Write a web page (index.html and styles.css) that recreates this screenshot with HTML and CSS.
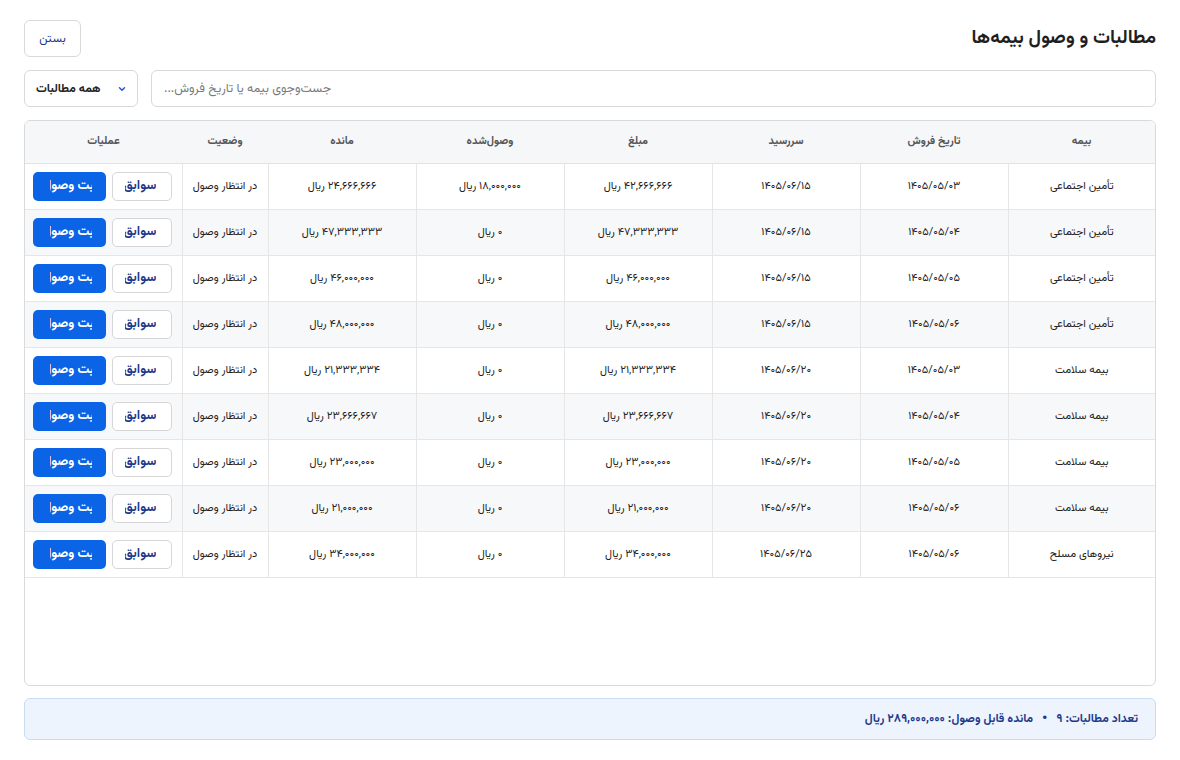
FILE: index.html
```html
<!DOCTYPE html>
<html lang="fa" dir="rtl">
<head>
<meta charset="utf-8">
<title>مطالبات و وصول بیمه‌ها</title>
<link rel="stylesheet" href="styles.css">
</head>
<body>
<div class="page">
  <header class="topbar">
    <h1 class="title">مطالبات و وصول بیمه‌ها</h1>
    <button class="btn-close">بستن</button>
  </header>
  <div class="filters">
    <div class="search"><span>جست‌وجوی بیمه یا تاریخ فروش...</span></div>
    <div class="select">
      <svg class="chev" width="10" height="10" viewBox="0 0 10 10"><path d="M2.5 3.8 L5 6.2 L7.5 3.8" fill="none" stroke="#1d4ed8" stroke-width="1.4" stroke-linecap="round" stroke-linejoin="round"/></svg>
      <span class="select-label">همه مطالبات</span>
    </div>
  </div>
  <div class="table-wrap">
    <table class="grid">
      <colgroup>
        <col class="c-ins"><col class="c-w"><col class="c-w"><col class="c-w"><col class="c-w"><col class="c-w"><col class="c-status"><col class="c-ops">
      </colgroup>
      <thead>
        <tr><th>بیمه</th><th>تاریخ فروش</th><th>سررسید</th><th>مبلغ</th><th>وصول‌شده</th><th>مانده</th><th>وضعیت</th><th>عملیات</th></tr>
      </thead>
      <tbody>
        <tr><td>تأمین اجتماعی</td><td>۱۴۰۵/۰۵/۰۳</td><td>۱۴۰۵/۰۶/۱۵</td><td>۴۲,۶۶۶,۶۶۶ ریال</td><td>۱۸,۰۰۰,۰۰۰ ریال</td><td>۲۴,۶۶۶,۶۶۶ ریال</td><td>در انتظار وصول</td><td class="ops"><div class="ops-in"><span class="b b-hist"><span class="clip"><span>سوابق</span></span></span><span class="b b-pay"><span class="clip"><span>ثبت وصول</span></span></span></div></td></tr>
        <tr><td>تأمین اجتماعی</td><td>۱۴۰۵/۰۵/۰۴</td><td>۱۴۰۵/۰۶/۱۵</td><td>۴۷,۳۳۳,۳۳۳ ریال</td><td>۰ ریال</td><td>۴۷,۳۳۳,۳۳۳ ریال</td><td>در انتظار وصول</td><td class="ops"><div class="ops-in"><span class="b b-hist"><span class="clip"><span>سوابق</span></span></span><span class="b b-pay"><span class="clip"><span>ثبت وصول</span></span></span></div></td></tr>
        <tr><td>تأمین اجتماعی</td><td>۱۴۰۵/۰۵/۰۵</td><td>۱۴۰۵/۰۶/۱۵</td><td>۴۶,۰۰۰,۰۰۰ ریال</td><td>۰ ریال</td><td>۴۶,۰۰۰,۰۰۰ ریال</td><td>در انتظار وصول</td><td class="ops"><div class="ops-in"><span class="b b-hist"><span class="clip"><span>سوابق</span></span></span><span class="b b-pay"><span class="clip"><span>ثبت وصول</span></span></span></div></td></tr>
        <tr><td>تأمین اجتماعی</td><td>۱۴۰۵/۰۵/۰۶</td><td>۱۴۰۵/۰۶/۱۵</td><td>۴۸,۰۰۰,۰۰۰ ریال</td><td>۰ ریال</td><td>۴۸,۰۰۰,۰۰۰ ریال</td><td>در انتظار وصول</td><td class="ops"><div class="ops-in"><span class="b b-hist"><span class="clip"><span>سوابق</span></span></span><span class="b b-pay"><span class="clip"><span>ثبت وصول</span></span></span></div></td></tr>
        <tr><td>بیمه سلامت</td><td>۱۴۰۵/۰۵/۰۳</td><td>۱۴۰۵/۰۶/۲۰</td><td>۲۱,۳۳۳,۳۳۴ ریال</td><td>۰ ریال</td><td>۲۱,۳۳۳,۳۳۴ ریال</td><td>در انتظار وصول</td><td class="ops"><div class="ops-in"><span class="b b-hist"><span class="clip"><span>سوابق</span></span></span><span class="b b-pay"><span class="clip"><span>ثبت وصول</span></span></span></div></td></tr>
        <tr><td>بیمه سلامت</td><td>۱۴۰۵/۰۵/۰۴</td><td>۱۴۰۵/۰۶/۲۰</td><td>۲۳,۶۶۶,۶۶۷ ریال</td><td>۰ ریال</td><td>۲۳,۶۶۶,۶۶۷ ریال</td><td>در انتظار وصول</td><td class="ops"><div class="ops-in"><span class="b b-hist"><span class="clip"><span>سوابق</span></span></span><span class="b b-pay"><span class="clip"><span>ثبت وصول</span></span></span></div></td></tr>
        <tr><td>بیمه سلامت</td><td>۱۴۰۵/۰۵/۰۵</td><td>۱۴۰۵/۰۶/۲۰</td><td>۲۳,۰۰۰,۰۰۰ ریال</td><td>۰ ریال</td><td>۲۳,۰۰۰,۰۰۰ ریال</td><td>در انتظار وصول</td><td class="ops"><div class="ops-in"><span class="b b-hist"><span class="clip"><span>سوابق</span></span></span><span class="b b-pay"><span class="clip"><span>ثبت وصول</span></span></span></div></td></tr>
        <tr><td>بیمه سلامت</td><td>۱۴۰۵/۰۵/۰۶</td><td>۱۴۰۵/۰۶/۲۰</td><td>۲۱,۰۰۰,۰۰۰ ریال</td><td>۰ ریال</td><td>۲۱,۰۰۰,۰۰۰ ریال</td><td>در انتظار وصول</td><td class="ops"><div class="ops-in"><span class="b b-hist"><span class="clip"><span>سوابق</span></span></span><span class="b b-pay"><span class="clip"><span>ثبت وصول</span></span></span></div></td></tr>
        <tr><td>نیروهای مسلح</td><td>۱۴۰۵/۰۵/۰۶</td><td>۱۴۰۵/۰۶/۲۵</td><td>۳۴,۰۰۰,۰۰۰ ریال</td><td>۰ ریال</td><td>۳۴,۰۰۰,۰۰۰ ریال</td><td>در انتظار وصول</td><td class="ops"><div class="ops-in"><span class="b b-hist"><span class="clip"><span>سوابق</span></span></span><span class="b b-pay"><span class="clip"><span>ثبت وصول</span></span></span></div></td></tr>
      </tbody>
    </table>
  </div>
  <footer class="summary">
    <span>تعداد مطالبات: ۹</span>
    <span class="dot">•</span>
    <span>مانده قابل وصول: ۲۸۹,۰۰۰,۰۰۰ ریال</span>
  </footer>
</div>
</body>
</html>
```

FILE: styles.css
```css
* { box-sizing: border-box; }
html, body { margin: 0; padding: 0; background: #fff; }
body {
  font-family: "Vazirmatn", "DejaVu Sans", "Noto Sans", sans-serif;
  color: #222;
  direction: rtl;
}
.page {
  height: 760px;
  padding: 20px 24px;
  display: flex;
  flex-direction: column;
}
.topbar {
  display: flex;
  align-items: center;
  justify-content: space-between;
  height: 37px;
}
.title {
  margin: 0;
  font-size: 19px;
  font-weight: 700;
  color: #1f1f1f;
}
.btn-close {
  width: 57px;
  height: 37px;
  border: 1px solid #d9d9d9;
  border-radius: 6px;
  background: #fff;
  color: #1e3a8a;
  font-family: inherit;
  font-size: 12px;
}
.filters {
  display: flex;
  gap: 13px;
  margin-top: 13px;
  height: 37px;
}
.search {
  flex: 1;
  border: 1px solid #d9d9d9;
  border-radius: 6px;
  display: flex;
  align-items: center;
  justify-content: flex-end;
  padding-left: 12px;
  font-size: 12.5px;
  color: #7a7a7a;
}
.select {
  width: 114px;
  border: 1px solid #d9d9d9;
  border-radius: 6px;
  display: flex;
  align-items: center;
  justify-content: space-between;
  padding: 0 10px 0 11px;
}
.select-label { font-size: 12px; font-weight: 700; color: #222; }
.chev { display: block; }
.table-wrap {
  margin-top: 13px;
  flex: 1;
  border: 1px solid #dadada;
  border-radius: 6px;
  overflow: hidden;
}
.grid {
  width: 100%;
  table-layout: fixed;
  border-collapse: collapse;
  font-size: 11px;
}
.c-ins { width: 147px; }
.c-w { width: 148px; }
.c-status { width: 86px; }
.c-ops { width: 157px; }
.grid th {
  height: 42px;
  background: #f6f7f9;
  color: #555;
  font-weight: 700;
  font-size: 11px;
  border-bottom: 1px solid #e2e2e2;
  text-align: center;
  padding: 0 4px;
}
.grid td {
  height: 46px;
  text-align: center;
  border-bottom: 1px solid #e6e6e6;
  border-left: 1px solid #e6e6e6;
  padding: 0 4px;
  white-space: nowrap;
  color: #222;
}
.grid td:last-child { border-left: none; }
.grid tbody tr:nth-child(even) td { background: #f7f8fa; }
.grid td.ops { padding: 0 10px 0 8px; }
.ops-in {
  display: flex;
  gap: 6px;
}
.b {
  height: 29px;
  border-radius: 5px;
  display: flex;
  align-items: center;
  white-space: nowrap;
  font-size: 13px;
  font-weight: 700;
}
.clip {
  flex: 1;
  min-width: 0;
  display: flex;
  justify-content: center;
  overflow: hidden;
}
.clip > span { flex-shrink: 0; }
.b-hist {
  width: 60px;
  border: 1px solid #d6d6d6;
  background: #fff;
  color: #1e3a8a;
  padding: 0 15px 0 12px;
}
.b-pay {
  width: 73px;
  background: #0b63e5;
  color: #fff;
  padding: 0 14px 0 17px;
}
.summary {
  margin-top: 12px;
  height: 42px;
  background: #edf4fe;
  border: 1px solid #c9dcf3;
  border-radius: 6px;
  display: flex;
  align-items: center;
  gap: 9px;
  padding-right: 17px;
  font-size: 12px;
  font-weight: 700;
  color: #1e3a8a;
}
.dot { font-size: 15px; line-height: 1; }
```
